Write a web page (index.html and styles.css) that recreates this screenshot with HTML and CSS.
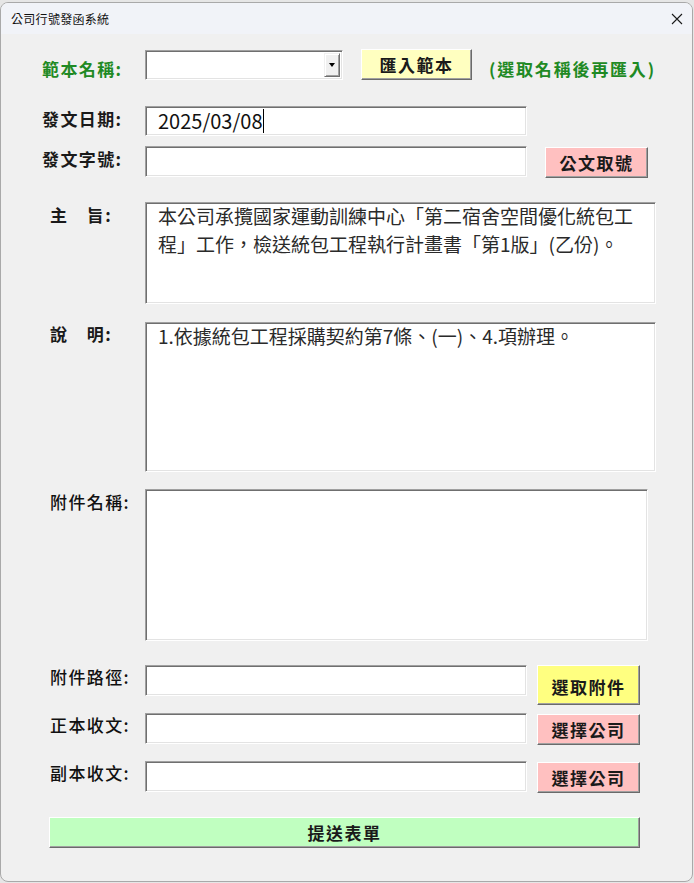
FILE: index.html
```html
<!DOCTYPE html>
<html lang="zh-Hant">
<head>
<meta charset="utf-8">
<title>公司行號發函系統</title>
<link rel="stylesheet" href="styles.css">
</head>
<body>
<div class="window">
  <div class="titlebar">
    <span class="title">公司行號發函系統</span>
    <svg class="close" width="12" height="12" viewBox="0 0 12 12"><path d="M1 1 L11 11 M11 1 L1 11" stroke="#1a1a1a" stroke-width="1.1" fill="none"/></svg>
  </div>
  <div class="form">
    <div class="row row-template">
      <div class="label label-green label-top">範本名稱:</div>
      <div class="combo">
        <div class="combo-value"></div>
        <div class="combo-btn"><span class="arrow"></span></div>
      </div>
      <div class="btn btn-import">匯入範本</div>
      <div class="hint">(選取名稱後再匯入)</div>
    </div>

    <div class="row row-date">
      <div class="label label-bold">發文日期:</div>
      <div class="field field-line field-date"><span class="date-text">2025/03/08</span><span class="caret"></span></div>
    </div>

    <div class="row row-number">
      <div class="label label-bold">發文字號:</div>
      <div class="field field-line field-h31"></div>
      <div class="btn btn-pink btn-number">公文取號</div>
    </div>

    <div class="row row-subject">
      <div class="label label-bold label-indent">主　旨:</div>
      <div class="field memo memo-subject"><div class="memo-text">本公司承攬國家運動訓練中心「第二宿舍空間優化統包工程」工作，檢送統包工程執行計畫書「第1版」(乙份)。</div></div>
    </div>

    <div class="row row-desc">
      <div class="label label-bold label-indent label-flat">說　明:</div>
      <div class="field memo memo-desc"><div class="memo-text">1.依據統包工程採購契約第7條、(一)、4.項辦理。</div></div>
    </div>

    <div class="row row-attach">
      <div class="label label-indent label-medium">附件名稱:</div>
      <div class="field memo memo-attach"></div>
    </div>

    <div class="row row-path">
      <div class="label label-indent label-flat label-medium">附件路徑:</div>
      <div class="field field-line field-h31"></div>
      <div class="btn btn-yellow btn-side btn-tall">選取附件</div>
    </div>

    <div class="row row-main">
      <div class="label label-indent label-flat label-medium">正本收文:</div>
      <div class="field field-line field-h31"></div>
      <div class="btn btn-pink btn-side">選擇公司</div>
    </div>

    <div class="row row-copy">
      <div class="label label-indent label-flat label-medium">副本收文:</div>
      <div class="field field-line field-h31"></div>
      <div class="btn btn-pink btn-side">選擇公司</div>
    </div>

    <div class="row row-submit">
      <div class="btn btn-green btn-submit">提送表單</div>
    </div>
  </div>
</div>
</body>
</html>
```

FILE: styles.css
```css
* { box-sizing: border-box; }

html, body {
  margin: 0;
  padding: 0;
}

body {
  background: #e6e6e6;
  font-family: "Noto Sans CJK TC", "Noto Sans", sans-serif;
  color: #1a1a1a;
  padding-top: 2px;
}

.window {
  width: 693px;
  height: 880px;
  background: #f0f0f0;
  border: 1px solid #a9a9a9;
  border-radius: 8px;
  overflow: hidden;
}

.titlebar {
  height: 31px;
  background: #f1f3f8;
  display: flex;
  align-items: center;
  justify-content: space-between;
  padding: 0 9px 0 10px;
}

.title {
  font-size: 12px;
  color: #111;
  letter-spacing: 0.3px;
}

.close { display: block; }

.form {
  display: flex;
  flex-direction: column;
  padding-top: 15px;
}

.row {
  display: flex;
  align-items: flex-start;
}

.row-date { margin-top: 25px; }
.row-number { margin-top: 10px; }
.row-subject { margin-top: 24px; }
.row-desc { margin-top: 18px; }
.row-attach { margin-top: 17px; }
.row-path { margin-top: 24px; }
.row-main { margin-top: 8px; }
.row-copy { margin-top: 16px; }
.row-submit { margin-top: 24px; }

.label {
  width: 144px;
  flex: none;
  padding-left: 41px;
  padding-top: 1px;
  font-size: 17px;
  line-height: 24px;
  letter-spacing: 1.4px;
  color: #1a1a1a;
  white-space: nowrap;
}

.label-indent { padding-left: 49px; }
.label-flat { padding-top: 0; }
.label-top { padding-top: 8px; }
.label-bold { font-weight: 700; }
.label-medium { font-weight: 500; color: #111; }
.label-green { color: #1f8a24; font-weight: 700; }

/* sunken text fields */
.field {
  flex: none;
  background: #fff;
  border-top: 1px solid #a0a0a0;
  border-left: 1px solid #a0a0a0;
  border-right: 1px solid #ffffff;
  border-bottom: 1px solid #ffffff;
  box-shadow: inset 1px 1px 0 #6f6f6f, inset -1px -1px 0 #e3e3e3;
}

.field-line {
  width: 382px;
  height: 30px;
}

.field-h31 { height: 31px; }

.field-date {
  display: flex;
  align-items: center;
  padding-left: 12px;
}

.date-text {
  font-size: 20px;
  line-height: 24px;
  color: #111;
}

.caret {
  width: 1px;
  height: 24px;
  background: #000;
  margin-left: 1px;
}

.memo {
  width: 511px;
  padding: 0 12px 0 12px;
}

.memo-subject { height: 102px; }
.memo-desc { height: 150px; }
.memo-attach { width: 503px; height: 152px; }

.memo-text {
  font-size: 19px;
  line-height: 28px;
  color: #2a2a2a;
  margin-top: -1px;
}

/* combo box */
.combo {
  flex: none;
  width: 198px;
  height: 30px;
  margin-top: 1px;
  display: flex;
  justify-content: flex-end;
  background: #fff;
  border-top: 1px solid #a0a0a0;
  border-left: 1px solid #a0a0a0;
  border-right: 1px solid #ffffff;
  border-bottom: 1px solid #ffffff;
  box-shadow: inset 1px 1px 0 #6f6f6f, inset -1px -1px 0 #e3e3e3;
  padding: 2px;
}

.combo-value { flex: 1; }

.combo-btn {
  width: 16px;
  height: 100%;
  background: #f0f0f0;
  border-top: 1px solid #f0f0f0;
  border-left: 1px solid #f0f0f0;
  border-right: 1px solid #6f6f6f;
  border-bottom: 1px solid #6f6f6f;
  box-shadow: inset 1px 1px 0 #ffffff, inset -1px -1px 0 #a0a0a0;
  display: flex;
  align-items: center;
  justify-content: center;
}

.arrow {
  width: 0;
  height: 0;
  border-left: 3px solid transparent;
  border-right: 3px solid transparent;
  border-top: 4px solid #000;
}

/* raised buttons */
.btn {
  flex: none;
  height: 31px;
  display: flex;
  align-items: center;
  justify-content: center;
  font-size: 17px;
  font-weight: 700;
  letter-spacing: 1.5px;
  color: #1a1a1a;
  border-top: 1px solid #ffffff;
  border-left: 1px solid #ffffff;
  border-right: 1px solid #6a6a6a;
  border-bottom: 1px solid #6a6a6a;
  box-shadow: inset -1px -1px 0 #a0a0a0;
}

.btn-import {
  width: 111px;
  margin-left: 18px;
  background: #ffffc0;
}

.btn-pink { background: #ffc0c0; }
.btn-yellow { background: #ffff80; }
.btn-green { background: #c0ffc0; }

.btn-number {
  width: 103px;
  margin-left: 18px;
  margin-top: 1px;
}

.btn-side {
  width: 103px;
  margin-left: 10px;
  margin-top: 1px;
}

.btn-tall {
  height: 40px;
  margin-top: 0;
  padding-top: 2px;
}

.btn-submit {
  width: 591px;
  margin-left: 48px;
}

.hint {
  margin-left: 17px;
  padding-top: 8px;
  font-size: 17px;
  line-height: 24px;
  letter-spacing: 1.8px;
  font-weight: 700;
  color: #1f8a24;
  white-space: nowrap;
}
```
